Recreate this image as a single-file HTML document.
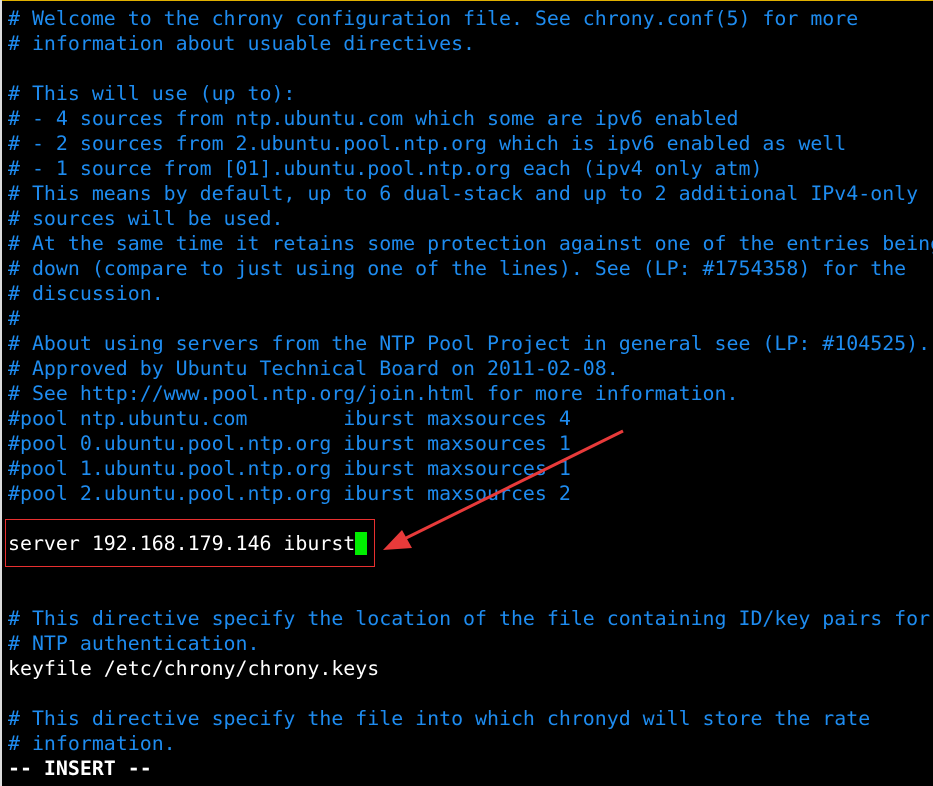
<!DOCTYPE html>
<html><head><meta charset="utf-8"><style>
html,body{margin:0;padding:0;background:#000;}
body{width:933px;height:786px;overflow:hidden;position:relative;}
.top{position:absolute;left:0;top:0;width:933px;height:1px;background:#e0b000;}
.left{position:absolute;left:0;top:0;width:2px;height:786px;background:#ddd;}
pre{position:absolute;left:8px;top:6px;margin:0;font-family:"DejaVu Sans Mono","Liberation Mono",monospace;font-size:19.9px;line-height:25px;color:#fff;white-space:pre;}
.c{color:#1e8cf0;}
.b{font-weight:bold;}
.cur{background:#00ee00;color:#00ee00;}
.box{position:absolute;left:5px;top:519px;width:368px;height:46px;border:1px solid #e83030;}
svg{position:absolute;left:0;top:0;}
</style></head><body>
<div class="top"></div><div class="left"></div>
<pre><span class="c"># Welcome to the chrony configuration file. See chrony.conf(5) for more
# information about usuable directives.</span>

<span class="c"># This will use (up to):
# - 4 sources from ntp.ubuntu.com which some are ipv6 enabled
# - 2 sources from 2.ubuntu.pool.ntp.org which is ipv6 enabled as well
# - 1 source from [01].ubuntu.pool.ntp.org each (ipv4 only atm)
# This means by default, up to 6 dual-stack and up to 2 additional IPv4-only
# sources will be used.
# At the same time it retains some protection against one of the entries being
# down (compare to just using one of the lines). See (LP: #1754358) for the
# discussion.
#
# About using servers from the NTP Pool Project in general see (LP: #104525).
# Approved by Ubuntu Technical Board on 2011-02-08.
# See http://www.pool.ntp.org/join.html for more information.
#pool ntp.ubuntu.com        iburst maxsources 4
#pool 0.ubuntu.pool.ntp.org iburst maxsources 1
#pool 1.ubuntu.pool.ntp.org iburst maxsources 1
#pool 2.ubuntu.pool.ntp.org iburst maxsources 2</span>

server 192.168.179.146 iburst<span class="cur"> </span>


<span class="c"># This directive specify the location of the file containing ID/key pairs for
# NTP authentication.</span>
keyfile /etc/chrony/chrony.keys

<span class="c"># This directive specify the file into which chronyd will store the rate
# information.</span>
<span class="b">-- INSERT --</span></pre>
<div class="box"></div>
<svg width="933" height="786">
<line x1="623" y1="431" x2="398" y2="542" stroke="#e83a3a" stroke-width="3"/>
<polygon points="383,550 402,530 412,548" fill="#e83a3a"/>
</svg>
</body></html>
